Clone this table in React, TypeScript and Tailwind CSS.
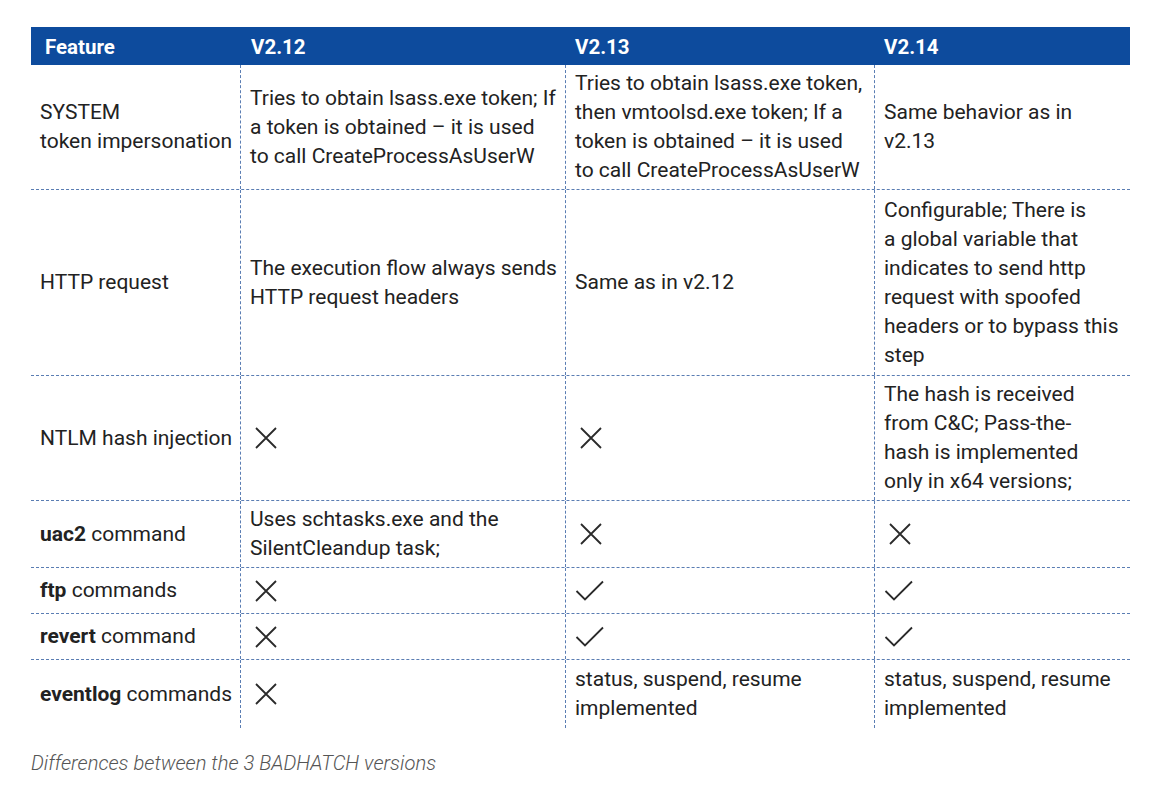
const cross = (
  <svg width="22" height="22" viewBox="0 0 22 22" className="block ml-[5px]">
    <path d="M1 1 L21 21 M21 1 L1 21" stroke="#2a2a2a" strokeWidth="1.8" fill="none" />
  </svg>
)

const check = (
  <svg width="30" height="22" viewBox="0 0 30 22" className="block">
    <path d="M1.5 11 L10 19.5 L28 1.5" stroke="#2a2a2a" strokeWidth="1.8" fill="none" />
  </svg>
)

type Row = {
  h: string
  cells: React.ReactNode[]
}

const rows: Row[] = [
  {
    h: 'h-[125px]',
    cells: [
      <>SYSTEM<br />token impersonation</>,
      <>Tries to obtain lsass.exe token; If<br />a token is obtained – it is used<br />to call CreateProcessAsUserW</>,
      <>Tries to obtain lsass.exe token,<br />then vmtoolsd.exe token; If a<br />token is obtained – it is used<br />to call CreateProcessAsUserW</>,
      <>Same behavior as in<br />v2.13</>,
    ],
  },
  {
    h: 'h-[186px]',
    cells: [
      'HTTP request',
      <>The execution flow always sends<br />HTTP request headers</>,
      'Same as in v2.12',
      <>Configurable; There is<br />a global variable that<br />indicates to send http<br />request with spoofed<br />headers or to bypass this<br />step</>,
    ],
  },
  {
    h: 'h-[125px]',
    cells: [
      'NTLM hash injection',
      cross,
      cross,
      <>The hash is received<br />from C&amp;C; Pass-the-<br />hash is implemented<br />only in x64 versions;</>,
    ],
  },
  {
    h: 'h-[67px]',
    cells: [
      <><b className="font-bold">uac2</b> command</>,
      <>Uses schtasks.exe and the<br />SilentCleandup task;</>,
      cross,
      cross,
    ],
  },
  {
    h: 'h-[46px]',
    cells: [<><b className="font-bold">ftp</b> commands</>, cross, check, check],
  },
  {
    h: 'h-[46px]',
    cells: [<><b className="font-bold">revert</b> command</>, cross, check, check],
  },
  {
    h: 'h-[68px]',
    cells: [
      <><b className="font-bold">eventlog</b> commands</>,
      cross,
      <>status, suspend, resume<br />implemented</>,
      <>status, suspend, resume<br />implemented</>,
    ],
  },
]

const widths = ['w-[210px]', 'w-[325px]', 'w-[309px]', 'w-[255px]']

export default function App() {
  return (
    <div className="w-[1164px] h-[796px] bg-white pt-[27px] pl-[31px] text-[#222] [font-family:Roboto,'Liberation_Sans',sans-serif]">
      <div className="w-[1099px]">
        <div className="flex h-[38px] items-center pt-[2px] bg-[#0d4b9d] text-white font-bold text-[20.5px]">
          <div className="w-[210px] pl-[14px]">Feature</div>
          <div className="w-[325px] pl-[10px]">V2.12</div>
          <div className="w-[309px] pl-[9px]">V2.13</div>
          <div className="w-[255px] pl-[9px]">V2.14</div>
        </div>
        {rows.map((row, i) => (
          <div
            key={i}
            className={`flex ${row.h} ${i < rows.length - 1 ? 'border-b border-dashed border-[#5a7db3]' : ''}`}
          >
            {row.cells.map((c, j) => (
              <div
                key={j}
                className={`${widths[j]} flex items-center whitespace-nowrap text-[21px] leading-[29px] pl-[9px] ${j < 3 ? 'border-r border-dashed border-[#5a7db3]' : ''}`}
              >
                <div>{c}</div>
              </div>
            ))}
          </div>
        ))}
        <div className="mt-[20px] italic font-light text-[20.2px] text-[#555]">
          Differences between the 3 BADHATCH versions
        </div>
      </div>
    </div>
  )
}
